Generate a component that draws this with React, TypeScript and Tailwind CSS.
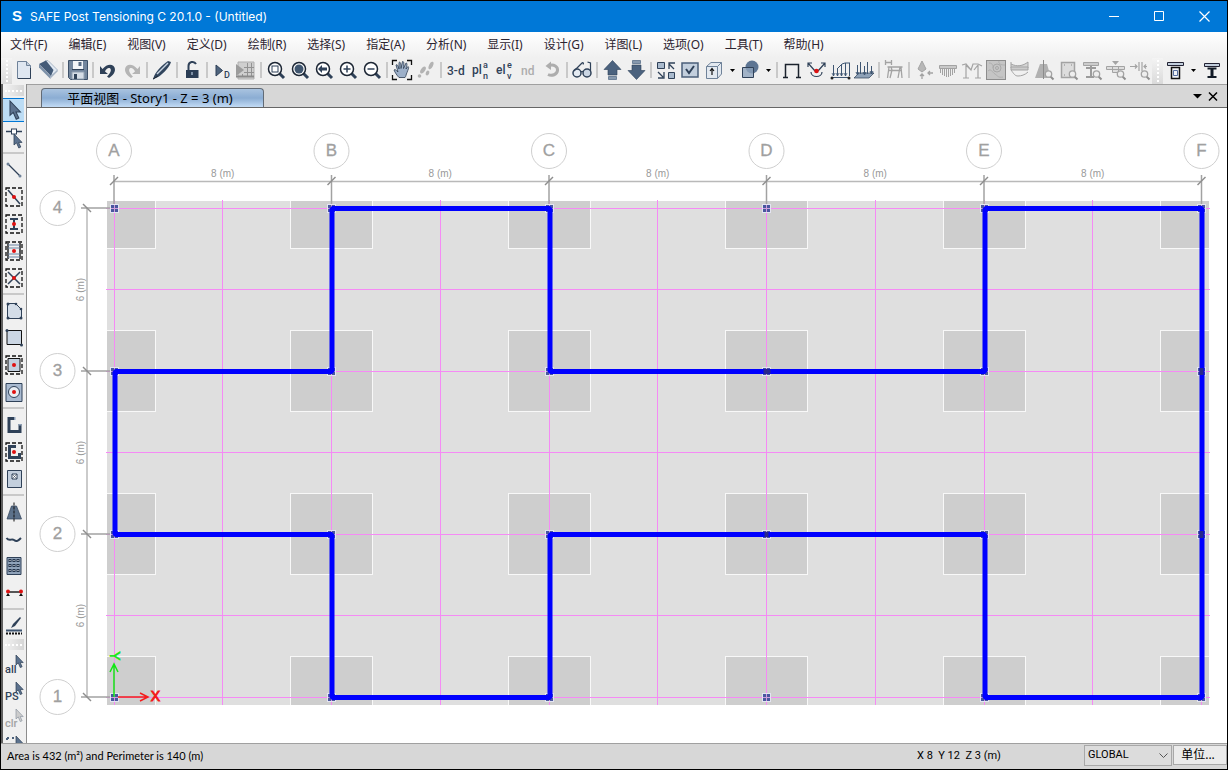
import type { ReactNode } from "react";

const INK = "#2f4158";
const MID = "#6f8299";
const PALE = "#c3cfdd";
const OFF = "#a3a3a3";

const uiFont = "font-['Noto_Sans','Noto_Sans_CJK_SC',sans-serif]";

function Icon({ children }: { children: ReactNode }) {
  return (
    <svg viewBox="0 0 24 24" width="24" height="24" fill="none" aria-hidden="true" className="block shrink-0">
      {children}
    </svg>
  );
}

function Magnifier({ children, fill = "#fff" }: { children?: ReactNode; fill?: string }) {
  return (
    <Icon>
      <path d="m15 15 5 5" stroke={INK} strokeWidth="3" />
      <circle cx="11" cy="11" r="6.500" fill={fill} stroke="#1c2634" strokeWidth="1.500" />
      {children}
    </Icon>
  );
}

function Loupe() {
  return (
    <>
      <path d="m18.500 18.500 3 3" stroke="#8f8f8f" strokeWidth="2" />
      <circle cx="16.500" cy="16" r="3.200" fill="#eee" stroke={OFF} strokeWidth="1.300" />
    </>
  );
}

// Letters that sit inside an icon.
function Glyph({ x, y, size, fill = INK, children }: { x: number; y: number; size: number; fill?: string; children: string }) {
  return (
    <text x={x} y={y} fontSize={size} fill={fill} fontWeight="500" fontFamily="Roboto, sans-serif">
      {children}
    </text>
  );
}

function DashedBox({ fill = "none" }: { fill?: string }) {
  return <rect x="4" y="3" width="16" height="18" fill={fill} stroke="#111" strokeWidth="1.300" strokeDasharray="4 2" />;
}

function RedDot() {
  return <circle cx="12" cy="12" r="2" fill="#e01010" />;
}

const Pointer = ({ x = 0, y = 0, scale = 1, fill = "#5c728e" }: { x?: number; y?: number; scale?: number; fill?: string }) => (
  <path transform={`translate(${x} ${y}) scale(${scale})`} d="M0 0v11l2.500-2.200L4.800 14l2-1-2.200-4.600H8Z" fill={fill} stroke={INK} strokeWidth=".8" />
);

type Tool = { label: string; icon: ReactNode; menu?: boolean; active?: boolean };

const toolGroups: Tool[][] = [
  [
    {
      label: "新建",
      icon: (
        <Icon>
          <path d="M5.500 3.500h9l4 4v13h-13Z" fill="#dfe7f1" stroke={MID} />
          <path d="M14.500 3.500v4h4" fill={PALE} stroke={MID} />
          <path d="M6 20.500h12.500V10" stroke={INK} />
        </Icon>
      ),
    },
    {
      label: "打开",
      icon: (
        <Icon>
          <path d="m9 3 3-.5 9.500 9.500-6.500 7Z" fill="#e1e9f2" stroke="#8fa0b4" strokeWidth=".7" />
          <path d="m3 6 7-3.500L17.500 12 15 18Z" fill="#445b78" />
          <path d="m3 6 11.500 12v3L3 9.500Z" fill="#7c90a8" />
          <path d="m14.500 20.500 7-7V12l-7 6Z" fill="#a4b2c3" />
        </Icon>
      ),
    },
  ],
  [
    {
      label: "保存",
      icon: (
        <Icon>
          <path d="M2.500 2.500h19v19h-17l-2-2Z" fill="#73869d" stroke="#3d5068" />
          <path d="M7 3h10v8H7Z" fill="#f2f4f7" />
          <path d="M6 14h12v7H6Z" fill="#d5dde6" stroke="#93a1b2" />
          <path d="M12.500 4v4h3V4Z" fill="#586c84" />
          <path d="M8 16h3v5H8Z" fill={INK} />
          <path d="M6 11.500h12" stroke={INK} />
        </Icon>
      ),
    },
  ],
  [
    {
      label: "撤销",
      icon: (
        <Icon>
          <path d="M4 8v8h8L9 13.500c1-2.500 3-4 4.500-3.500 2.500 1 1.500 5-2.500 8.500l2 1.500c6-3.500 7.500-9 4.500-12-3-2.500-7.500-1-11 3Z" fill={INK} />
        </Icon>
      ),
    },
    {
      label: "重做",
      icon: (
        <Icon>
          <path d="M20 8v8h-8l3-2.500c-1-2.500-3-4-4.500-3.500-2.500 1-1.500 5 2.500 8.500l-2 1.500C5 16.500 3.500 11 6.500 8c3-2.500 7.500-1 11 3Z" fill="#b5b5b5" />
        </Icon>
      ),
    },
  ],
  [
    {
      label: "刷新窗口",
      icon: (
        <Icon>
          <path d="M3 21.500c1-5 5-11 13-17l2-1.500 3 1c-1 4-7 11-12 14.500Z" fill="#31455d" />
          <path d="M7 16 18 5" stroke="#c8d4e2" strokeWidth="1.500" />
          <path d="m3 21 5-3" stroke="#1c2634" />
        </Icon>
      ),
    },
  ],
  [
    {
      label: "锁定模型",
      icon: (
        <Icon>
          <path d="M8.500 13V8a4 4 0 0 1 7.500-2" stroke={INK} strokeWidth="2" />
          <path d="M6 12h12.500v8H6Z" fill="#2b3d55" />
          <path d="M12 14v3" stroke="#9badc2" strokeWidth="1.500" />
        </Icon>
      ),
    },
  ],
  [
    {
      label: "运行分析",
      icon: (
        <Icon>
          <path d="M6 7v11l6.500-5.500Z" fill="#4e637d" stroke={INK} />
          <Glyph x={14} y={20} size={9}>D</Glyph>
        </Icon>
      ),
    },
    {
      label: "模型检查",
      icon: (
        <Icon>
          <path d="M4 4h16v17H4Z" fill="#cfcfcf" stroke="#b0b0b0" />
          <path d="M8.500 18v-2M13.500 5v13M17.500 5v13M10 9.500h10M10 14.500h10" stroke="#929292" />
          <path d="M2 6v12l8-6Z" fill="#9c9c9c" />
          <path d="M2 18.500h18" stroke="#8b8b8b" strokeWidth="2" />
        </Icon>
      ),
    },
  ],
  [
    { label: "框选缩放", icon: <Magnifier><rect x="8" y="8" width="6" height="6" stroke={INK} /></Magnifier> },
    { label: "恢复全视图", icon: <Magnifier><circle cx="11" cy="11" r="4.500" fill="#40566f" /></Magnifier> },
    { label: "上一视图", icon: <Magnifier><path d="m6 11 4-4v2.500h5v3h-5V15Z" fill={INK} /></Magnifier> },
    { label: "放大", icon: <Magnifier><path d="M7.500 11h7M11 7.500v7" stroke={INK} strokeWidth="1.500" /></Magnifier> },
    { label: "缩小", icon: <Magnifier><path d="M7.500 11h7" stroke={INK} strokeWidth="1.500" /></Magnifier> },
  ],
  [
    {
      label: "平移",
      icon: (
        <Icon>
          <path d="M2.500 7V2.500H7M17 2.500h4.500V7M2.500 17v4.500H7M17 21.500h4.500V17" stroke="#111" strokeWidth="1.300" />
          <path d="M9 19.500c-2-2-4-5-5-7.500 1-1 2 0 4 2L6 7c1-1 2 0 3 4V4.500c1-1 2 0 2 6l1.500-7c1.500 0 1.500 1 1 7l2.500-5.500c1.500 0 1 2 0 6l2-2.500c1.500 1 0 3-1 6-1 2-1 4-2 5Z" fill="#9db0c9" stroke="#2c3c52" strokeWidth=".8" />
        </Icon>
      ),
    },
    {
      label: "漫游",
      icon: (
        <Icon>
          <g fill="#b3b3b3">
            <ellipse cx="9" cy="12" rx="2" ry="4" transform="rotate(35 9 12)" />
            <circle cx="5.500" cy="18" r="1.800" />
            <ellipse cx="17" cy="7.500" rx="2" ry="4" transform="rotate(25 17 7.500)" />
            <ellipse cx="13.500" cy="15" rx="1.700" ry="2.500" transform="rotate(25 13.500 15)" />
          </g>
        </Icon>
      ),
    },
  ],
  [
    { label: "三维视图", icon: <Icon><Glyph x={3} y={17} size={12}>3-d</Glyph></Icon> },
    {
      label: "平面视图",
      icon: <Icon><Glyph x={4} y={16} size={12}>pl</Glyph><Glyph x={15} y={10} size={9}>a</Glyph><Glyph x={15} y={21} size={9}>n</Glyph></Icon>,
    },
    {
      label: "立面视图",
      icon: <Icon><Glyph x={4} y={16} size={12}>el</Glyph><Glyph x={15} y={10} size={9}>e</Glyph><Glyph x={15} y={21} size={9}>v</Glyph></Icon>,
    },
    { label: "命名视图", icon: <Icon><Glyph x={5} y={17} size={12} fill="#adadad">nd</Glyph></Icon> },
    {
      label: "旋转视图",
      icon: (
        <Icon>
          <path d="M9 7.500c5-1.500 9 1 8.500 5s-5.500 6-9.500 4" stroke="#adadad" strokeWidth="3" />
          <path d="M5.500 8 11 3.500V12Z" fill="#adadad" />
        </Icon>
      ),
    },
  ],
  [
    {
      label: "显示选项",
      icon: (
        <Icon>
          <circle cx="7" cy="15" r="4" fill="#e5ebf2" stroke={INK} strokeWidth="1.500" />
          <circle cx="17" cy="15" r="4" fill="#cbd6e3" stroke={INK} strokeWidth="1.500" />
          <path d="M11 14c1-1 1.500-1 2 0M4 13l8-8c1-1 2 0 1 1.500M20.500 13V5l-3-1" stroke={INK} strokeWidth="1.200" />
        </Icon>
      ),
    },
  ],
  [
    {
      label: "上一层",
      icon: (
        <Icon>
          <path d="m12.500 2.500 8.500 9h-4V17H8v-5.500H4Z" fill="#4b627e" stroke="#2c4059" strokeWidth=".6" />
          <path d="M8.500 18.500h8v3h-8Z" fill="#8799ae" stroke={MID} />
        </Icon>
      ),
    },
    {
      label: "下一层",
      icon: (
        <Icon>
          <path d="M12.500 21.500 4 12.500h4V7h9v5.500h4Z" fill="#4b627e" stroke="#2c4059" strokeWidth=".6" />
          <path d="M8.500 2.500h8v3h-8Z" fill="#8799ae" stroke={MID} />
        </Icon>
      ),
    },
  ],
  [
    {
      label: "对象收缩",
      icon: (
        <Icon>
          <path d="M3.500 4.500h7v6h-7ZM14.500 14.500h6v6h-6Z" fill="#a9bacd" stroke={INK} />
          <path d="m20 11-5-5m0 5V5h6M4 14l5 5m1-5v6H4" stroke={INK} strokeWidth="1.300" />
        </Icon>
      ),
    },
    {
      label: "设置显示",
      icon: (
        <Icon>
          <rect x="4" y="5" width="16" height="14" fill={PALE} stroke="#4b5f79" strokeWidth="1.500" />
          <path d="m8 11 3 4 5-7" stroke={INK} strokeWidth="2" />
        </Icon>
      ),
    },
    {
      label: "指定显示",
      menu: true,
      icon: (
        <Icon>
          <path d="M4.500 8.500 9 4.500h10.500V16l-4 4.500h-11Z" fill="#e3e9f0" stroke={MID} />
          <path d="M4.500 8.500h11v12M15.500 8.500l4-4" stroke={MID} />
          <path d="M10 17v-6m-2 2 2-2.500 2 2.500" stroke="#111" strokeWidth="1.200" />
        </Icon>
      ),
    },
    {
      label: "对象视图",
      menu: true,
      icon: (
        <Icon>
          <circle cx="14" cy="9" r="6.500" fill="#5d7593" />
          <path d="M4.500 9.500h11v10h-11Z" fill="#8fa4bd" fillOpacity=".8" stroke={INK} />
        </Icon>
      ),
    },
  ],
  [
    { label: "变形前形状", icon: <Icon><path d="M5.500 19V6.500h13V19M3 19.500h5M16 19.500h5" stroke="#1b222c" strokeWidth="1.500" /></Icon> },
    {
      label: "节点反力",
      icon: (
        <Icon>
          <path d="m4 5 7 8m10-8-7 8M4 9V5h4M17 5h4v4M7 14c0 6 11 6 11 0" stroke={INK} strokeWidth="1.200" />
          <circle cx="12.500" cy="13" r="2.300" fill="#d11" />
        </Icon>
      ),
    },
    {
      label: "荷载",
      icon: (
        <Icon>
          <path d="M3 19.500h19M5.500 18V7M9.500 18v-8M13.500 18V6M17.500 18V5M21.500 18V5M10 10l4-4 3-1h5" stroke="#3f5672" />
          <path d="m4 15 1.500 3L7 15m1 0 1.500 3 1.500-3m1 0 1.500 3 1.500-3m1 0 1.500 3 1.500-3" stroke="#3f5672" strokeWidth=".8" />
          <circle cx="4" cy="20" r="1.500" fill="#222" />
          <circle cx="21" cy="20" r="1.500" fill="#222" />
        </Icon>
      ),
    },
    {
      label: "楼板荷载",
      icon: (
        <Icon>
          <path d="m2 20 5-5h15l-5 5Z" fill="#8ea1b7" stroke={INK} strokeWidth=".7" />
          <path d="M5.500 17V7m3 9V4m4 13V8m3 8V4m4 12V8M4 14l1.500 3L7 14m4 0 1.500 3 1.500-3m4-1 1.500 3 1.500-3" stroke="#3f5672" />
        </Icon>
      ),
    },
  ],
  [{ label: "结果表", icon: <Icon><path d="M3.500 2v5m6-5v5m-6-2.500h6M5.500 9h15M7 9 5.500 20M9 9l1 3-2 8m11-11 1 11m-2-11-2 11M7 12.500h13" stroke={OFF} strokeWidth="1.300" /></Icon> }],
  [
    {
      label: "冲切",
      icon: <Icon><path d="m10 3-4 8 4 3 4-3Z" fill="#b7b7b7" stroke={OFF} /><path d="M10 21v-5m-2 2 2-2 2 2m9-3h-5m2-2-2 2 2 2" stroke={OFF} strokeWidth="1.300" /></Icon>,
    },
    { label: "应力", icon: <Icon><path d="M3.500 7.500h17v3h-17Z" fill="#c9c9c9" stroke={OFF} /><path d="M4.500 11v4m2-4v6m2-6v7m2-7v8m2-8v8m2-8v7m2-7v6m2-6v4" stroke={OFF} /></Icon> },
    { label: "变形", icon: <Icon><path d="M6 20V7m12 13V7M3 20h6m6 0h6M2 7l4-1 5 6 2-6 5 0 4 2M6 7l4 4m8-4-4 5" stroke={OFF} strokeWidth="1.200" /></Icon> },
    {
      label: "云图",
      icon: (
        <Icon>
          <rect x="2.500" y="2.500" width="19" height="19" fill="#c5c5c5" stroke="#8d8d8d" />
          <path d="M4 13c3-3 4 1 7 3s3 4 8 3M5 5c4 0 4 3 4 5m6-7c-1 3 2 4 6 4" stroke="#b0b0b0" />
          <circle cx="13" cy="10" r="4" stroke="#a8a8a8" />
          <circle cx="13" cy="10" r="1.500" stroke="#a8a8a8" />
        </Icon>
      ),
    },
    { label: "内力图", icon: <Icon><path d="M3 4v6h17V4c-5 4-11 5-17 2" fill="#d5d5d5" stroke={OFF} /><path d="M3 9h17v3H3Z" fill="#ccc" stroke={OFF} /><path d="M3 12c3 4 4 6 7 6s7-1 10-4" stroke={OFF} /></Icon> },
    { label: "设计带", icon: <Icon><path d="M8 6h7l4 14H3Z" fill="#b1b1b1" /><path d="M11.500 2v19" stroke="#8c8c8c" /><Loupe /></Icon> },
    { label: "楼板设计", icon: <Icon><path d="M5.500 4.500h13v15h-13Z" fill="#ddd" stroke={OFF} strokeWidth="1.500" /><path d="M8 7h1m6 0h1M8 17h1" stroke="#888" /><Loupe /></Icon> },
    { label: "梁设计", icon: <Icon><path d="M3.500 4.500h15v3h-15Z" fill="#ccc" stroke={OFF} /><path d="M11 8v11M6 10h10M6 19h8" stroke="#9b9b9b" strokeWidth="2" /><Loupe /></Icon> },
    { label: "冲切设计", icon: <Icon><path d="M8 3h7l-3.500 4Z" fill={OFF} /><path d="M2.500 8.500h18v3h-18ZM8.500 8.500h6v6h-6Z" fill="#ddd" stroke={OFF} /><Loupe /></Icon> },
    { label: "裂缝", icon: <Icon><path d="M11 4v9M14 4v9M2 8.500h7m-2-2 2 2-2 2m12-2h-3m2-2-2 2 2 2" stroke={OFF} strokeWidth="1.200" /><Loupe /></Icon> },
  ],
];

const designTools: Tool[] = [
  {
    label: "楼板截面",
    menu: true,
    icon: <Icon><path d="M4.500 4.500h16v3h-16Z" fill={PALE} stroke="#223" /><path d="M8.500 9.500h8v11h-8Z" fill="#f0f3f7" stroke="#111" strokeWidth="1.500" /><path d="M10.500 12.500h4v5h-4Z" stroke="#5870a0" /></Icon>,
  },
  { label: "梁截面", icon: <Icon><path d="M5.500 5.500h15v3h-15Z" fill={PALE} stroke="#223" /><path d="M8.500 10.500h9M8.500 19h9" stroke="#111a26" strokeWidth="2" /><path d="M13 10v9" stroke="#111a26" strokeWidth="3" /></Icon> },
];

const drawGroups: Tool[][] = [
  [
    { label: "选择对象", active: true, icon: <Icon><Pointer x={8} y={3} scale={1.3} /></Icon> },
    { label: "整形", icon: <Icon><path d="M4 6.500h16" stroke={INK} strokeWidth="1.500" /><rect x="9.500" y="4" width="5" height="5" fill="#fff" stroke={INK} /><Pointer x={12} y={9} /></Icon> },
  ],
  [
    { label: "绘制线", icon: <Icon><path d="m6 6 12 12" stroke={INK} strokeWidth="1.300" /><circle cx="6" cy="6" r="1.500" fill={MID} /><circle cx="18" cy="18" r="1.500" fill={MID} /></Icon> },
    { label: "快速绘制线", icon: <Icon><DashedBox /><path d="m6 5 12 14" stroke={INK} strokeWidth="1.500" /><RedDot /></Icon> },
    { label: "快速绘制柱", icon: <Icon><DashedBox /><path d="M8 7h8m-4 0v10m-4 0h8" stroke={INK} strokeWidth="2" /><RedDot /></Icon> },
    { label: "快速绘制次梁", icon: <Icon><DashedBox /><path d="M6 4v16M18 4v16" stroke="#222" strokeWidth="1.500" /><path d="M6 6h12M6 9h12M6 15h12M6 18h12" stroke="#6b84a3" /><RedDot /></Icon> },
    { label: "快速绘制支撑", icon: <Icon><DashedBox /><path d="m6 6 12 12M18 6 6 18" stroke={INK} strokeWidth="1.500" /><RedDot /></Icon> },
  ],
  [
    {
      label: "绘制多边形板",
      icon: <Icon><path d="M5.500 4.500h8l6 6v9h-14Z" fill="#d4dde8" stroke={INK} /><g fill={INK}><circle cx="6" cy="5" r="1.500" /><circle cx="14" cy="5" r="1.300" /><circle cx="19" cy="10" r="1.300" /><circle cx="19" cy="19" r="1.500" /><circle cx="6" cy="19" r="1.500" /></g></Icon>,
    },
    { label: "绘制矩形板", icon: <Icon><path d="M5 4.500h14.500v14H5Z" fill="#cbd6e3" stroke="#111" /><circle cx="5" cy="4.500" r="1.500" fill={INK} /><circle cx="19.500" cy="19" r="1.500" fill={INK} /></Icon> },
    { label: "快速绘制板", icon: <Icon><DashedBox /><path d="M6 5.500h12v13H6Z" fill={PALE} stroke="#111" /><RedDot /></Icon> },
    { label: "绘制圆形板", icon: <Icon><path d="M4 3.500h16v18H4Z" fill="#a9bad0" stroke={INK} /><circle cx="12" cy="12" r="5.500" fill="#e8edf3" stroke={INK} /><RedDot /></Icon> },
  ],
  [
    { label: "绘制墙", icon: <Icon><path d="M13 5.500H7v13h11V11" stroke={INK} strokeWidth="3" /><path d="M12 5.500h1.500M18 12.500V11" stroke="#8da0b7" strokeWidth="3" /></Icon> },
    { label: "快速绘制墙", icon: <Icon><DashedBox /><path d="M14 6.500H7.500v11h10V13" stroke={INK} strokeWidth="3" /><RedDot /></Icon> },
    { label: "绘制洞口", icon: <Icon><path d="M5.500 3.500h14v17h-14Z" fill={PALE} stroke={INK} /><path d="M10 7h5v5h-5Z" fill="#fff" stroke={INK} /><path d="m10 7 5 5m0-5-5 5" stroke={INK} strokeWidth=".6" /></Icon> },
  ],
  [
    { label: "绘制设计带", icon: <Icon><path d="M9.500 6h5l5 13H5Z" fill="#5c718a" stroke={INK} strokeWidth=".7" /><path d="M12 2.500v19" stroke="#111" strokeDasharray="3 1" /></Icon> },
    { label: "绘制预应力筋", icon: <Icon><path d="M4.500 11c3 4 5 0 7.500 2s4 1 7-2" stroke={INK} strokeWidth="2" /></Icon> },
    { label: "绘制轴网", icon: <Icon><path d="M5 3.500h14v17H5Z" fill="#8fa2b9" stroke={INK} /><path d="M6.500 6.500h11m-11 5h11m-11 5h11" stroke="#24344a" strokeWidth="3" strokeDasharray="3 1" /><path d="M7.500 6.500h10m-10 5h10m-10 5h10" stroke="#fff" strokeDasharray="1 3" /></Icon> },
    { label: "绘制尺寸线", icon: <Icon><path d="M6 11h13" stroke="#222" strokeWidth="1.500" /><circle cx="6" cy="10.500" r="2" fill="#d11" /><circle cx="19" cy="10.500" r="2" fill="#d11" /><path d="m4 15 2-3 2 3Zm13 0 2-3 2 3Z" fill="#111" /></Icon> },
  ],
  [{ label: "绘制截面切割", icon: <Icon><path d="m9 14 2-4 7-7 1 1-6 8Z" fill={INK} /><path d="M4 16.500h16" stroke="#3d5470" strokeWidth="2" /><path d="M4 19.500h16" stroke="#111" strokeWidth="2" strokeDasharray="2 1" /></Icon> }],
];

const selectTools: Tool[] = [
  { label: "全选", icon: <Icon><Glyph x={3} y={21} size={11}>all</Glyph><Pointer x={14} y={3} scale={0.9} /></Icon> },
  { label: "恢复上次选择", icon: <Icon><Glyph x={3} y={21} size={11}>PS</Glyph><Pointer x={14} y={3} scale={0.9} /></Icon> },
  { label: "清除选择", icon: <Icon><Glyph x={3} y={21} size={11} fill={OFF}>clr</Glyph><g opacity=".5"><Pointer x={14} y={3} scale={0.9} fill="#aaa" /></g></Icon> },
  { label: "相交选择", icon: <Icon><path d="M5 5h9M5 5v6" stroke="#4c617b" strokeWidth="2" strokeDasharray="2 3" /><Pointer x={14} y={3} scale={0.9} /></Icon> },
];

function ToolButton({ tool }: { tool: Tool }) {
  return (
    <>
      <button type="button" aria-label={tool.label} className="h-6 w-6 shrink-0">
        {tool.icon}
      </button>
      {tool.menu && (
        <button type="button" aria-label={`${tool.label}菜单`} className="flex h-6 w-3 shrink-0 items-center justify-center">
          <svg width="5" height="3" aria-hidden="true">
            <path d="M0 0h5L2.500 3Z" fill="#000" />
          </svg>
        </button>
      )}
    </>
  );
}

function Grip() {
  return (
    <div className="flex h-[26px] w-[11px] shrink-0 justify-center bg-linear-to-b from-[#f4f4f4] to-[#dadada]">
      <div className="my-[2px] border-l-2 border-dotted border-white" />
    </div>
  );
}

function Toolbar() {
  return (
    <div role="toolbar" aria-label="标准" className="flex h-[27px] items-start overflow-hidden pt-px">
      <Grip />
      {toolGroups.map((group, i) => (
        <div key={i} className="flex shrink-0 items-center">
          {i > 0 && <div className="mx-[2px] h-4 w-[2px] bg-[#c9c9c9]" />}
          {group.map((tool) => (
            <ToolButton key={tool.label} tool={tool} />
          ))}
        </div>
      ))}
      <Grip />
      {designTools.map((tool) => (
        <ToolButton key={tool.label} tool={tool} />
      ))}
    </div>
  );
}

function SideGrip() {
  return (
    <div className="flex h-[11px] shrink-0 items-center bg-linear-to-r from-[#f4f4f4] to-[#d6d6d6] px-[2px]">
      <div className="w-full border-t-2 border-dotted border-white" />
    </div>
  );
}

function SideButton({ tool }: { tool: Tool }) {
  return (
    <div className="flex h-[27px] shrink-0 items-center justify-center">
      <button
        type="button"
        aria-label={tool.label}
        className={tool.active ? "w-full border-y border-[#0078d7] bg-[#bcdcf4]" : "w-full"}
      >
        <span className="flex h-[22px] items-center justify-center">{tool.icon}</span>
      </button>
    </div>
  );
}

function SideBar() {
  return (
    <div
      role="toolbar"
      aria-label="绘图"
      aria-orientation="vertical"
      className="flex w-[26px] shrink-0 flex-col overflow-hidden border-r border-l-2 border-r-[#8c8c8c] border-l-[#5f5f5f] bg-[#f0f0f0] pt-px pr-[2px]"
    >
      <SideGrip />
      {drawGroups.map((group, i) => (
        <div key={i} className="shrink-0">
          {i > 0 && <div className="my-[2px] h-[2px] bg-[#c9c9c9]" />}
          {group.map((tool) => (
            <SideButton key={tool.label} tool={tool} />
          ))}
        </div>
      ))}
      <SideGrip />
      {selectTools.map((tool) => (
        <SideButton key={tool.label} tool={tool} />
      ))}
    </div>
  );
}

const menus = ["文件(F)", "编辑(E)", "视图(V)", "定义(D)", "绘制(R)", "选择(S)", "指定(A)", "分析(N)", "显示(I)", "设计(G)", "详图(L)", "选项(O)", "工具(T)", "帮助(H)"];

// Plan geometry in drawing units, origin at the corner of the view.
const columns = ["A", "B", "C", "D", "E", "F"].map((name, i) => ({ name, x: 87 + i * 217.5 }));
const rows = ["4", "3", "2", "1"].map((name, i) => ({ name, y: 100 + i * 163 }));
const minorX = Array.from({ length: 11 }, (_, i) => 87 + i * 108.75);
const minorY = Array.from({ length: 7 }, (_, i) => 100 + i * 81.5);

const outline: [number, number][] = [
  [0, 1], [1, 1], [1, 0], [2, 0], [2, 1], [4, 1], [4, 0], [5, 0],
  [5, 3], [4, 3], [4, 2], [2, 2], [2, 3], [1, 3], [1, 2], [0, 2],
];
const outlinePoints = outline.map(([c, r]) => `${Math.floor(columns[c].x) + 0.5},${rows[r].y + 0.5}`).join(" ");

function isOnOutline(c: number, r: number) {
  return outline.some(([oc, or]) => oc === c && or === r) || (c === 3 && (r === 1 || r === 2)) || c === 5;
}

function PlanView() {
  return (
    <svg viewBox="0 0 1200 635" preserveAspectRatio="xMidYMid meet" className="block h-full w-full" role="img" aria-label="Story1 平面" fontFamily="Liberation Sans, Arial, sans-serif">
      <defs>
        <clipPath id="slab">
          <rect x="80" y="93" width="1102" height="504" />
        </clipPath>
      </defs>
      <rect x="80" y="93" width="1102" height="504" fill="#dfdfdf" />
      <g clipPath="url(#slab)" fill="#cecece" stroke="#f8f8f8">
        {columns.map((c) =>
          rows.map((r) => (
            <rect key={c.name + r.name} x={Math.floor(c.x) - 40.5} y={r.y - 40.5} width="82" height="81" />
          ))
        )}
      </g>

      <g stroke="#f58af5">
        {minorX.map((x) => <path key={x} d={`M${Math.floor(x) + 0.5} 92v505`} />)}
        {minorY.map((y) => <path key={y} d={`M79 ${Math.floor(y) + 0.5}h1104`} />)}
      </g>

      <path d="M87 73.500h1087.500" stroke="#b9b9b9" strokeWidth="1.500" />
      <path d="M60 100v489" stroke="#cbcbcb" strokeWidth="2" />
      {columns.map((c) => (
        <g key={c.name}>
          <path d={`M${c.x} 67v33`} stroke="#a2a2a2" strokeWidth="1.500" />
          <path d={`m${c.x - 4} 77 8-8`} stroke="#8e8e8e" strokeWidth="1.500" />
          <circle cx={c.x} cy="43" r="17.500" fill="#fff" stroke="#cfcfcf" />
          <text x={c.x} y="48" textAnchor="middle" fontSize="17" fill="#a0a0a0" stroke="#a0a0a0" strokeWidth=".3">{c.name}</text>
        </g>
      ))}
      {rows.map((r) => (
        <g key={r.name}>
          <path d={`M54 ${r.y}h33`} stroke="#a2a2a2" strokeWidth="1.500" />
          <path d={`m56 ${r.y - 4} 8 8`} stroke="#8e8e8e" strokeWidth="1.500" />
          <circle cx="30.500" cy={r.y} r="17.500" fill="#fff" stroke="#cfcfcf" />
          <text x="30.500" y={r.y + 5} textAnchor="middle" fontSize="17" fill="#a0a0a0" stroke="#a0a0a0" strokeWidth=".3">{r.name}</text>
        </g>
      ))}
      <g fontSize="10" fill="#999" textAnchor="middle">
        {columns.slice(1).map((c) => (
          <text key={c.name} x={c.x - 108.75} y="69">8 (m)</text>
        ))}
        {rows.slice(1).map((r) => (
          <text key={r.name} transform={`translate(57 ${r.y - 81.5}) rotate(-90)`}>6 (m)</text>
        ))}
      </g>

      {columns.map((c, ci) =>
        rows.map((r, ri) => {
          if (!isOnOutline(ci, ri) && !((ci === 0 || ci === 3) && (ri === 0 || ri === 3))) return null;
          const x = Math.floor(c.x);
          return (
            <g key={c.name + r.name}>
              <rect x={x - 4} y={r.y - 4} width="9" height="9" fill="#e4e4f2" />
              <rect x={x - 3} y={r.y - 3} width="7" height="7" fill="#4a569f" />
              <path d={`M${x + 0.5} ${r.y - 3}v7M${x - 3} ${r.y + 0.5}h7`} stroke="#cf9fdd" />
            </g>
          );
        })
      )}
      <polygon points={outlinePoints} transform="translate(.5 0)" fill="none" stroke="#0000ff" strokeWidth="5" strokeLinejoin="bevel" />
      <path d="M739.500 261v5m-3-2.500h7M739.500 424v5M1174.500 260v7M1174.500 423v7" stroke="#27278c" strokeWidth="4" />

      <path d="M87 589v-33m-4 8 4-8 4 8" fill="none" stroke="#12e812" strokeWidth="1.500" />
      <text transform="translate(83 548) rotate(90)" textAnchor="middle" fontSize="14" y="0" fill="#12e812" stroke="#12e812" strokeWidth=".6">Y</text>
      <path d="M91 589h29m-7-4 8 4-8 4" fill="none" stroke="#f41c1c" strokeWidth="1.500" />
      <text x="128.500" y="593" textAnchor="middle" fontSize="14" fill="#f41c1c" stroke="#f41c1c">X</text>
    </svg>
  );
}

function TitleBar() {
  return (
    <header className="flex h-[31px] shrink-0 items-center bg-[#0078d7] text-white">
      <span className="w-[29px] pl-[11px] font-['Liberation_Sans',Arial,sans-serif] text-[15px] font-bold">S</span>
      <h1 className="flex-1 font-[Inter,sans-serif] text-[12px]">SAFE Post Tensioning C 20.1.0 - (Untitled)</h1>
      <button type="button" aria-label="最小化" className="flex h-full w-[45px] items-center justify-center">
        <svg width="11" height="11" aria-hidden="true"><path d="M0 5.500h10" stroke="#fff" /></svg>
      </button>
      <button type="button" aria-label="最大化" className="flex h-full w-[45px] items-center justify-center">
        <svg width="11" height="11" aria-hidden="true"><path d="M.5.5h9v9h-9Z" fill="none" stroke="#fff" /></svg>
      </button>
      <button type="button" aria-label="关闭" className="flex h-full w-[45px] items-center justify-center">
        <svg width="11" height="11" aria-hidden="true"><path d="m.5.5 10 10m0-10-10 10" stroke="#fff" strokeWidth="1.200" /></svg>
      </button>
    </header>
  );
}

function ViewTabs() {
  return (
    <div className="flex h-[24px] shrink-0 items-end border-t border-b border-t-[#a0a0a0] border-b-[#666] bg-[#d7d7d7] pl-[14px]">
      <button
        type="button"
        className="h-[19px] w-[223px] rounded-t-[4px] border border-b-0 border-[#626b76] bg-linear-to-b from-[#a9c3e0] via-[#8badd3] to-[#c2dbf5] pr-[5px] text-[13px] leading-[18px] text-black"
      >
        平面视图 - Story1 - Z = 3 (m)
      </button>
      <div className="flex-1" />
      <button type="button" aria-label="窗口列表" className="flex h-full w-4 items-center justify-center">
        <svg width="9" height="5" aria-hidden="true"><path d="M0 0h9L4.500 4.500Z" fill="#000" /></svg>
      </button>
      <button type="button" aria-label="关闭视图" className="mr-[6px] flex h-full w-4 items-center justify-center">
        <svg width="10" height="9" aria-hidden="true"><path d="m1 .5 8 8m0-8-8 8" stroke="#000" strokeWidth="1.500" /></svg>
      </button>
    </div>
  );
}

function StatusBar() {
  return (
    <footer className="flex h-[26px] shrink-0 items-start border-t border-[#a0a0a0] bg-[#d7d7d7] text-[11px] text-black">
      <p className="flex-1 pl-[6px] font-[Lato,sans-serif] leading-6">Area is 432 (m²) and Perimeter is 140 (m)</p>
      <p className="w-[167px] font-[Roboto,sans-serif] leading-6 whitespace-pre">X 8  Y 12  Z 3 (m)</p>
      <div className="relative mt-px">
        <select aria-label="坐标系" defaultValue="GLOBAL" className="h-[21px] w-[88px] appearance-none border border-[#a8a8a8] bg-[#dcdcdc] pl-[3px] font-[Roboto,sans-serif] text-[11px]">
          <option>GLOBAL</option>
        </select>
        <svg width="9" height="6" aria-hidden="true" className="pointer-events-none absolute top-2 right-1">
          <path d="m.5.5 4 4 4-4" fill="none" stroke="#555" />
        </svg>
      </div>
      <button type="button" className="mt-px ml-px h-[20px] w-[54px] border border-[#a8a8a8] bg-[#ebebeb] pr-1 text-[12px] leading-[18px]">
        单位...
      </button>
    </footer>
  );
}

export default function App() {
  return (
    <div className={`${uiFont} flex h-screen flex-col overflow-hidden border border-black bg-white`}>
      <TitleBar />
      <div className="shrink-0 bg-linear-to-b from-white to-[#f0f0f0] to-50%">
        <nav className="flex h-[25px] items-center gap-[3px] overflow-hidden text-[12px] text-[#2c2430]">
          {menus.map((label) => (
            <button key={label} type="button" className="shrink-0 px-[9px] whitespace-nowrap">
              {label}
            </button>
          ))}
        </nav>
        <Toolbar />
      </div>
      <div className="flex min-h-0 flex-1">
        <SideBar />
        <main className="flex min-w-0 flex-1 flex-col">
          <ViewTabs />
          <div className="min-h-0 flex-1">
            <PlanView />
          </div>
        </main>
      </div>
      <StatusBar />
    </div>
  );
}
